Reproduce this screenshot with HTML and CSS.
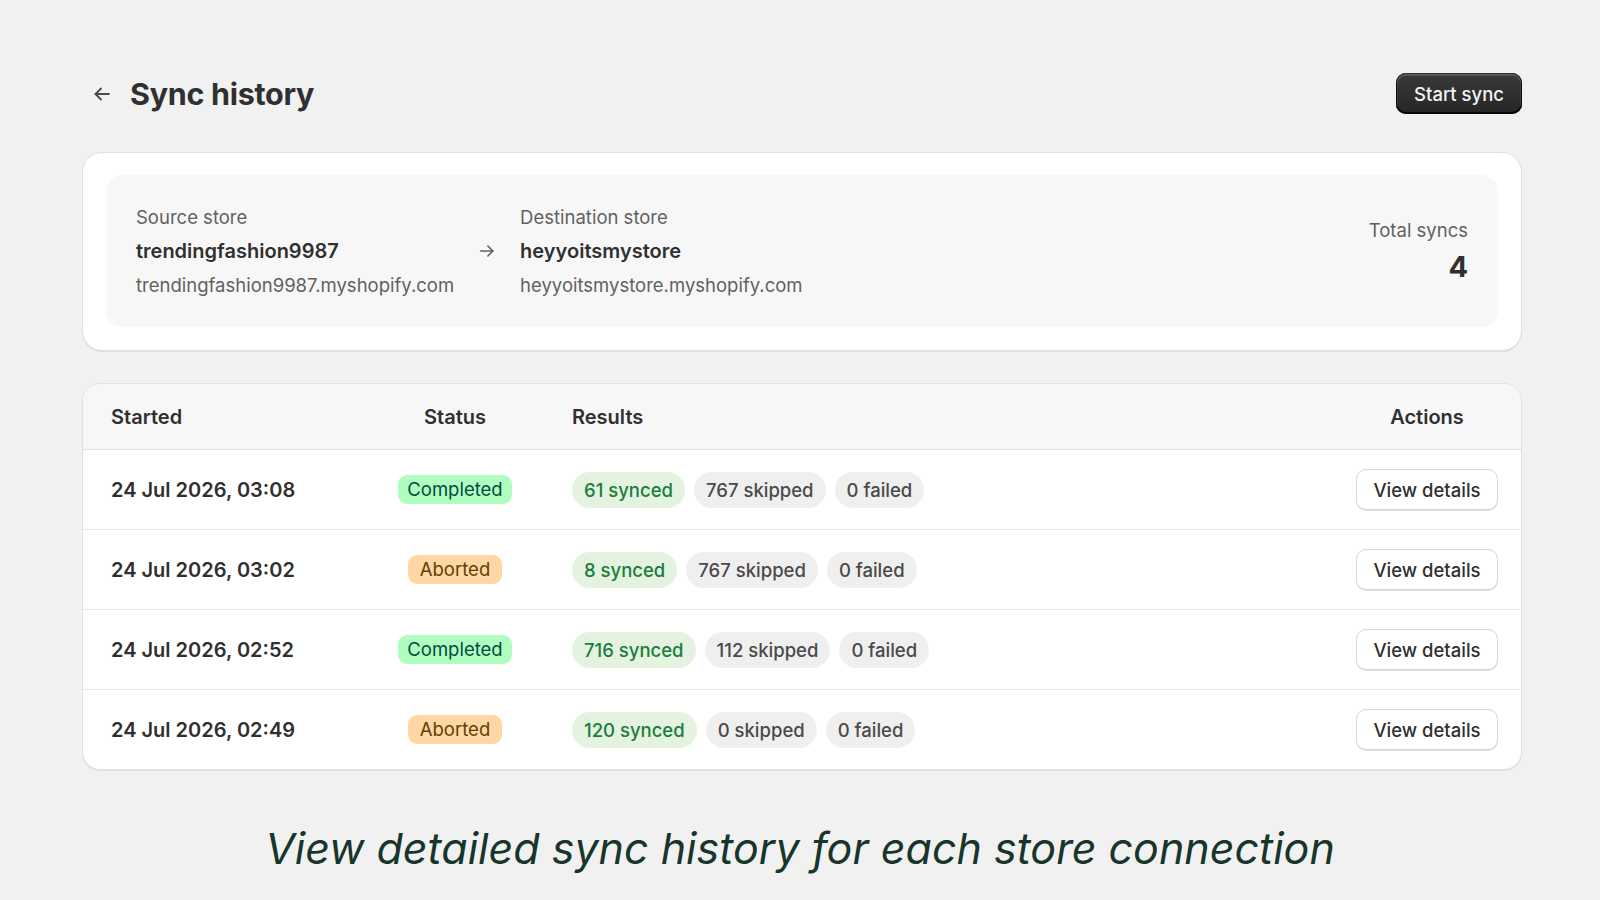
FILE: index.html
```html
<!DOCTYPE html>
<html lang="en">
<head>
  <meta charset="UTF-8">
  <meta name="viewport" content="width=device-width, initial-scale=1.0">
  <title>Sync history</title>
  <link rel="stylesheet" href="styles.css">
</head>
<body>
  <div class="page">
    <div class="page-header">
      <div class="title-group">
        <button class="back-btn" aria-label="Back">
          <svg width="20" height="20" viewBox="0 0 20 20" fill="none" stroke="currentColor" stroke-width="1.8" stroke-linecap="round" stroke-linejoin="round">
            <path d="M17 10H3.5"/>
            <path d="M9 4.5L3.5 10L9 15.5"/>
          </svg>
        </button>
        <h1>Sync history</h1>
      </div>
      <button class="primary-btn">Start sync</button>
    </div>

    <div class="card">
      <div class="store-box">
        <div class="stores">
          <div class="store">
            <div class="muted">Source store</div>
            <div class="store-name">trendingfashion9987</div>
            <div class="muted">trendingfashion9987.myshopify.com</div>
          </div>
          <div class="store-arrow">
            <svg width="18" height="18" viewBox="0 0 20 20" fill="none" stroke="currentColor" stroke-width="1.8" stroke-linecap="round" stroke-linejoin="round">
              <path d="M3 10H16.5"/>
              <path d="M11 4.5L16.5 10L11 15.5"/>
            </svg>
          </div>
          <div class="store">
            <div class="muted">Destination store</div>
            <div class="store-name">heyyoitsmystore</div>
            <div class="muted">heyyoitsmystore.myshopify.com</div>
          </div>
        </div>
        <div class="total">
          <div class="muted total-label">Total syncs</div>
          <div class="total-value">4</div>
        </div>
      </div>
    </div>

    <div class="card table-card">
      <div class="row table-head">
        <div>Started</div>
        <div class="center">Status</div>
        <div>Results</div>
        <div class="center">Actions</div>
      </div>

      <div class="row">
        <div class="date">24 Jul 2026, 03:08</div>
        <div class="center"><span class="badge badge-success">Completed</span></div>
        <div class="results">
          <span class="pill pill-green">61 synced</span>
          <span class="pill">767 skipped</span>
          <span class="pill">0 failed</span>
        </div>
        <div class="center"><button class="secondary-btn">View details</button></div>
      </div>

      <div class="row">
        <div class="date">24 Jul 2026, 03:02</div>
        <div class="center"><span class="badge badge-warning">Aborted</span></div>
        <div class="results">
          <span class="pill pill-green">8 synced</span>
          <span class="pill">767 skipped</span>
          <span class="pill">0 failed</span>
        </div>
        <div class="center"><button class="secondary-btn">View details</button></div>
      </div>

      <div class="row">
        <div class="date">24 Jul 2026, 02:52</div>
        <div class="center"><span class="badge badge-success">Completed</span></div>
        <div class="results">
          <span class="pill pill-green">716 synced</span>
          <span class="pill">112 skipped</span>
          <span class="pill">0 failed</span>
        </div>
        <div class="center"><button class="secondary-btn">View details</button></div>
      </div>

      <div class="row">
        <div class="date">24 Jul 2026, 02:49</div>
        <div class="center"><span class="badge badge-warning">Aborted</span></div>
        <div class="results">
          <span class="pill pill-green">120 synced</span>
          <span class="pill">0 skipped</span>
          <span class="pill">0 failed</span>
        </div>
        <div class="center"><button class="secondary-btn">View details</button></div>
      </div>
    </div>
  </div>

  <p class="caption">View detailed sync history for each store connection</p>
</body>
</html>
```

FILE: styles.css
```css
body {
  font-family: Inter, "Noto Sans", sans-serif;
  background-color: #f1f1f1;
  color: #303030;
  margin: 0;
  padding: 0;
}

button {
  font-family: inherit;
  cursor: pointer;
}

.page {
  width: 1440px;
  margin: 0 0 0 82px;
  padding-top: 73px;
}

.page-header {
  display: flex;
  align-items: center;
  justify-content: space-between;
  height: 41px;
  margin-bottom: 38px;
}

.title-group {
  display: flex;
  align-items: center;
  gap: 18px;
}

.back-btn {
  display: flex;
  align-items: center;
  background: none;
  border: none;
  padding: 0 0 0 10px;
  color: #4a4a4a;
}

h1 {
  margin: 0;
  font-size: 30.5px;
  font-weight: 700;
  letter-spacing: -0.3px;
  color: #303030;
}

.primary-btn {
  height: 41px;
  padding: 0 18px;
  border: none;
  border-radius: 10px;
  background: linear-gradient(#3a3a3a, #262626);
  color: #f4f4f4;
  font-size: 18.5px;
  font-weight: 500;
  box-shadow: inset 0 -1px 0 1px rgba(0, 0, 0, 0.8), inset 0 0 0 1px #303030, inset 0 1px 0 1.5px rgba(255, 255, 255, 0.2);
}

.card {
  background-color: #fff;
  border: 1px solid #e1e1e1;
  border-radius: 20px;
  box-shadow: 0 1px 0 rgba(0, 0, 0, 0.08);
  padding: 22px 23px 23px;
}

.store-box {
  display: flex;
  align-items: center;
  justify-content: space-between;
  background-color: #f7f7f7;
  border-radius: 16px;
  padding: 25px 30px 25px 30px;
}

.stores {
  display: flex;
  align-items: center;
  gap: 24px;
}

.store div {
  line-height: 34px;
}

.muted {
  color: #616161;
  font-size: 18.5px;
}

.store-name {
  font-size: 20px;
  font-weight: 600;
  color: #303030;
}

.store-arrow {
  display: flex;
  color: #616161;
}

.total {
  text-align: right;
  padding-top: 2px;
}

.total-label {
  line-height: 30px;
}

.total-value {
  font-size: 29px;
  font-weight: 700;
  line-height: 44px;
}

.table-card {
  margin-top: 32px;
  padding: 0;
  overflow: hidden;
  border-radius: 18px;
}

.row {
  display: grid;
  grid-template-columns: 227px 186px 1fr 148px;
  column-gap: 24px;
  align-items: center;
  height: 79px;
  padding: 0 20px 0 28px;
  border-top: 1px solid #e6e6e6;
}

.table-head {
  height: 65px;
  border-top: none;
  border-bottom: 1px solid #e3e3e3;
  background-color: #f7f7f7;
  font-size: 20px;
  font-weight: 600;
}

.table-head + .row {
  border-top: none;
}

.center {
  text-align: center;
}

.date {
  font-size: 20px;
  font-weight: 600;
}

.badge {
  display: inline-block;
  font-size: 18.5px;
  line-height: 29px;
  padding: 0 9px;
  border-radius: 9px;
}

.badge-success {
  background-color: #affebf;
  color: #014b40;
}

.badge-warning {
  padding: 0 12px;
  background-color: #ffd6a4;
  color: #5e4200;
}

.results {
  display: flex;
  gap: 9px;
}

.pill {
  display: inline-block;
  font-size: 18.5px;
  font-weight: 500;
  line-height: 36px;
  padding: 0 12px;
  border-radius: 18px;
  background-color: #efefef;
  color: #4a4a4a;
}

.pill-green {
  background-color: #e3f3df;
  color: #1b7d3d;
}

.secondary-btn {
  height: 41px;
  padding: 0 16px;
  background-color: #fff;
  border: 1px solid #d6d6d6;
  border-radius: 10px;
  box-shadow: 0 1px 0 rgba(0, 0, 0, 0.12);
  color: #303030;
  font-size: 18.5px;
  font-weight: 500;
}

.caption {
  margin: 52px 0 0;
  text-align: center;
  font-size: 43px;
  font-style: italic;
  font-weight: 400;
  line-height: 53px;
  color: #17352b;
}
```
